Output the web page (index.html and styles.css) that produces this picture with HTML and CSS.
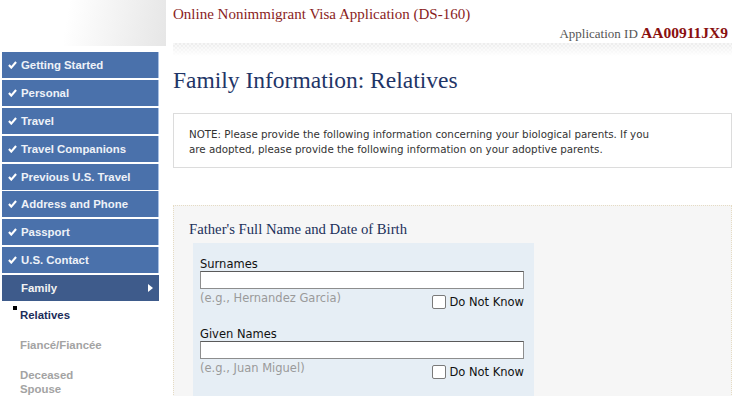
FILE: index.html
```html
<!DOCTYPE html>
<html lang="en">
<head>
    <meta charset="UTF-8">
    <title>Online Nonimmigrant Visa Application (DS-160)</title>
    <link rel="stylesheet" href="styles.css">
</head>
<body>
    <div class="page">
        <div class="side">
            <div class="brand"></div>
            <ul class="nav">
                <li class="done"><svg class="check" viewBox="0 0 10 9"><path d="M1 4.6 L3.6 7.4 L9 1.2" fill="none" stroke="#fff" stroke-width="2.4"/></svg>Getting Started</li>
                <li class="done"><svg class="check" viewBox="0 0 10 9"><path d="M1 4.6 L3.6 7.4 L9 1.2" fill="none" stroke="#fff" stroke-width="2.4"/></svg>Personal</li>
                <li class="done"><svg class="check" viewBox="0 0 10 9"><path d="M1 4.6 L3.6 7.4 L9 1.2" fill="none" stroke="#fff" stroke-width="2.4"/></svg>Travel</li>
                <li class="done"><svg class="check" viewBox="0 0 10 9"><path d="M1 4.6 L3.6 7.4 L9 1.2" fill="none" stroke="#fff" stroke-width="2.4"/></svg>Travel Companions</li>
                <li class="done"><svg class="check" viewBox="0 0 10 9"><path d="M1 4.6 L3.6 7.4 L9 1.2" fill="none" stroke="#fff" stroke-width="2.4"/></svg>Previous U.S. Travel</li>
                <li class="done"><svg class="check" viewBox="0 0 10 9"><path d="M1 4.6 L3.6 7.4 L9 1.2" fill="none" stroke="#fff" stroke-width="2.4"/></svg>Address and Phone</li>
                <li class="done"><svg class="check" viewBox="0 0 10 9"><path d="M1 4.6 L3.6 7.4 L9 1.2" fill="none" stroke="#fff" stroke-width="2.4"/></svg>Passport</li>
                <li class="done"><svg class="check" viewBox="0 0 10 9"><path d="M1 4.6 L3.6 7.4 L9 1.2" fill="none" stroke="#fff" stroke-width="2.4"/></svg>U.S. Contact</li>
                <li class="current">Family<span class="arrow"></span></li>
            </ul>
            <ul class="subnav">
                <li class="active">Relatives</li>
                <li>Fiancé/Fiancée</li>
                <li>Deceased<br>Spouse</li>
            </ul>
        </div>
        <div class="main">
            <div class="header">
                <div class="app-title">Online Nonimmigrant Visa Application (DS-160)</div>
                <div class="app-id">Application ID <b>AA00911JX9</b></div>
                <div class="band"></div>
            </div>
            <h1>Family Information: Relatives</h1>
            <div class="note">
                NOTE: Please provide the following information concerning your biological parents. If you are adopted, please provide the following information on your adoptive parents.
            </div>
            <div class="section">
                <h2>Father's Full Name and Date of Birth</h2>
                <div class="panel">
                    <div class="field">
                        <label>Surnames</label>
                        <input type="text">
                        <div class="hint-row">
                            <span class="hint">(e.g., Hernandez Garcia)</span>
                            <span class="dnk"><span class="box"></span>Do Not Know</span>
                        </div>
                    </div>
                    <div class="field">
                        <label>Given Names</label>
                        <input type="text">
                        <div class="hint-row">
                            <span class="hint">(e.g., Juan Miguel)</span>
                            <span class="dnk"><span class="box"></span>Do Not Know</span>
                        </div>
                    </div>
                    <div class="help-row"><span class="help"></span></div>
                </div>
            </div>
        </div>
    </div>
</body>
</html>
```
FILE: styles.css
```css
body {
    margin: 0;
    background-color: #fff;
    font-family: "DejaVu Sans", Verdana, sans-serif;
    overflow: hidden;
}
.page {
    display: flex;
    align-items: flex-start;
}
.side {
    width: 166px;
    flex-shrink: 0;
}
.brand {
    height: 46px;
    background: linear-gradient(100deg, #ffffff 40%, #e6e6e6 100%);
}
.nav {
    list-style: none;
    margin: 6px 0 0 2px;
    padding: 0;
    width: 157px;
}
.nav li {
    height: 26px;
    margin-bottom: 1.9px;
    display: flex;
    align-items: center;
    padding-left: 6px;
    font-family: "Liberation Sans", Arial, sans-serif;
    font-weight: bold;
    font-size: 11.4px;
    color: #fff;
    box-sizing: border-box;
}
.nav li.done {
    background-color: #4a71ab;
    border-right: 1px solid #a9c0e2;
    color: #eef2f8;
}
.check {
    width: 9px;
    height: 8px;
    margin-right: 4px;
}
.nav li.current {
    background-color: #3e5b8b;
    padding-left: 19px;
    position: relative;
    color: #f3f3f3;
}
.arrow {
    position: absolute;
    left: 146px;
    top: 9px;
    border-left: 5px solid #fff;
    border-top: 4px solid transparent;
    border-bottom: 4px solid transparent;
}
.subnav {
    list-style: none;
    margin: 7px 0 0 0;
    padding: 0 0 0 20px;
    font-family: "Liberation Sans", Arial, sans-serif;
    font-weight: bold;
    font-size: 11.4px;
    color: #a3a3a3;
}
.subnav li {
    line-height: 14px;
    margin-bottom: 16px;
    position: relative;
}
.subnav li.active {
    color: #1c2d5a;
}
.subnav li.active::before {
    content: "";
    position: absolute;
    left: -7px;
    top: -2px;
    width: 4px;
    height: 4px;
    background: #000;
}
.main {
    margin-left: 7px;
    width: 559px;
}
.header {
    font-family: "Liberation Serif", "Times New Roman", serif;
}
.app-title {
    padding-top: 5px;
    font-size: 15px;
    line-height: 18px;
    color: #8a1d1d;
}
.app-id {
    text-align: right;
    padding-right: 4px;
    font-size: 13px;
    line-height: 18px;
    color: #555;
    margin-top: 1px;
}
.app-id b {
    font-size: 15.5px;
    color: #8a1010;
}
.band {
    height: 13px;
    background-image:
        linear-gradient(to bottom, rgba(255,255,255,0) 0%, #fff 100%),
        repeating-conic-gradient(#ececec 0 25%, #f6f6f6 0 50%);
    background-size: 100% 100%, 4px 4px;
}
h1 {
    margin: 10px 0 0 0;
    font-family: "Liberation Serif", "Times New Roman", serif;
    font-weight: normal;
    font-size: 23.5px;
    line-height: 28px;
    color: #1f3567;
}
.note {
    margin-top: 19px;
    border: 1px solid #dcdcdc;
    padding: 13px 70px 10px 15px;
    font-size: 10.3px;
    line-height: 15px;
    color: #333;
}
.section {
    margin-top: 37px;
    background-color: #f6f6f6;
    border-top: 1px dotted #e6dcc4;
    border-left: 1px dotted #e6dcc4;
    border-right: 1px dotted #e6dcc4;
    padding: 13px 0 0 15px;
    height: 200px;
}
h2 {
    margin: 0;
    font-family: "Liberation Serif", "Times New Roman", serif;
    font-weight: normal;
    font-size: 14.7px;
    line-height: 20px;
    color: #21305a;
}
.panel {
    margin-top: 4px;
    margin-left: 4px;
    width: 341px;
    background-color: #e6eef5;
    padding: 14px 10px 0 7px;
    box-sizing: border-box;
    height: 160px;
}
.field {
    margin-bottom: 15px;
}
.field label {
    display: block;
    font-size: 11.5px;
    line-height: 14px;
    color: #111;
}
.field input {
    display: block;
    width: 324px;
    height: 18px;
    box-sizing: border-box;
    border: 1px solid #8d8d8d;
    border-top-color: #5a5a5a;
    background: #fff;
    margin: 0;
    padding: 0;
}
.hint-row {
    display: flex;
    justify-content: space-between;
    align-items: flex-start;
    height: 23px;
}
.hint {
    margin-top: 2px;
    font-size: 11.5px;
    line-height: 15px;
    color: #9a9a9a;
}
.dnk {
    display: flex;
    align-items: center;
    margin-top: 6px;
    font-size: 11.5px;
    color: #111;
}
.box {
    width: 12px;
    height: 12px;
    border: 1px solid #7a7a7a;
    border-radius: 2px;
    background: #fff;
    margin-right: 3px;
}
.help-row {
    padding-left: 83px;
}
.help {
    display: block;
    width: 14px;
    height: 14px;
    border: 1px solid #7fa2cf;
    border-radius: 50%;
    background: #eef4fb;
}
```
